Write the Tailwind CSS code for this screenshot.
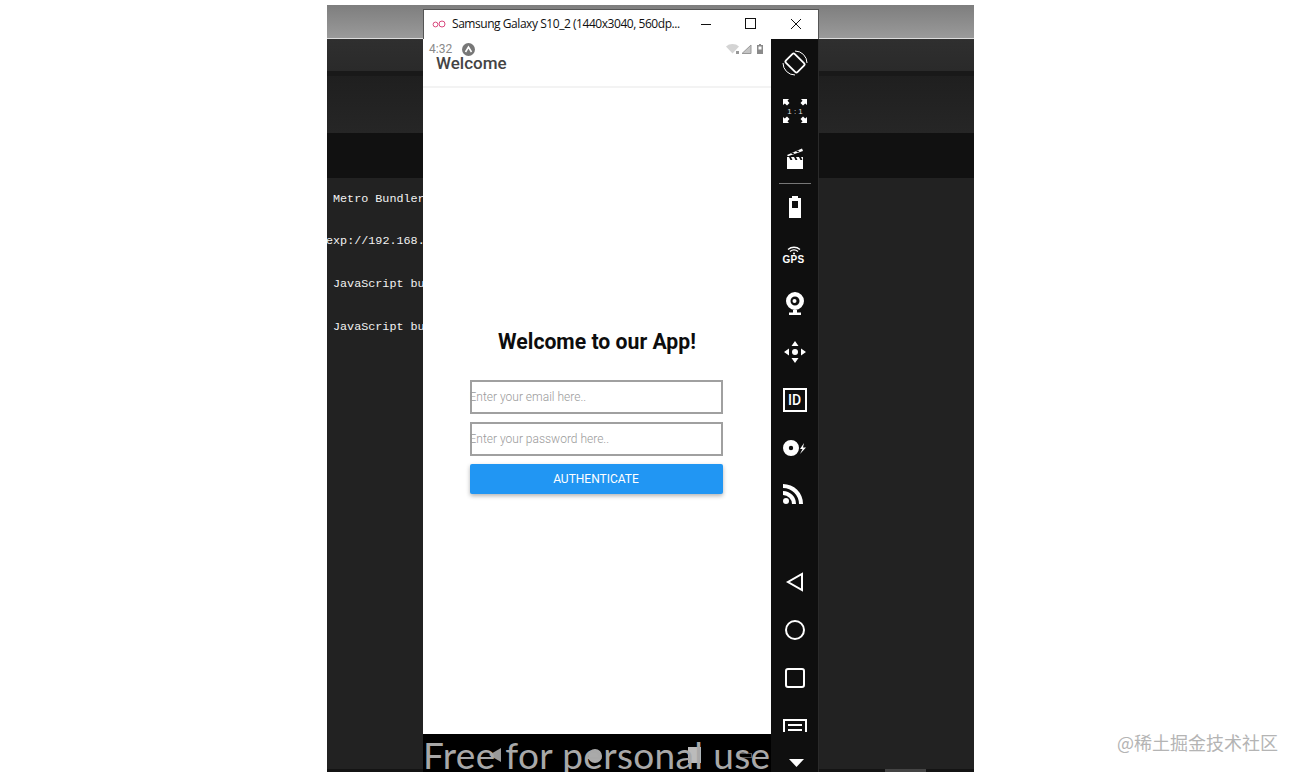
<!DOCTYPE html>
<html lang="en">
<head>
    <meta charset="UTF-8">
    <title>Samsung Galaxy S10_2</title>
    <script src="https://cdn.jsdelivr.net/npm/@tailwindcss/browser@4"></script>
</head>
<body class="bg-white h-[775px] w-[1300px] overflow-hidden relative font-['Roboto',sans-serif]">
    <!-- screenshot of the desktop behind the emulator -->
    <div class="relative ml-[327px] mt-[5px] w-[647px] h-[767px] flex flex-col bg-[#222] overflow-hidden">
        <div class="h-[33px] bg-gradient-to-b from-[#7e7e7e] to-[#9a9a9a]"></div>
        <div class="h-px bg-[#dcdcdc]"></div>
        <div class="h-[32px] bg-gradient-to-b from-[#2f2f2f] to-[#2a2a2a]"></div>
        <div class="h-[5px] bg-[#191919]"></div>
        <div class="h-[57px] bg-gradient-to-b from-[#1f1f1f] to-[#262626]"></div>
        <div class="h-[45px] bg-[#111]"></div>
        <div class="flex-1 pt-[13.500px] pl-[6px] font-['Liberation_Mono',monospace] text-[11.75px] leading-[14px] text-[#f2f2f2]">
            <p class="whitespace-nowrap">Metro Bundler</p>
            <p class="mt-[28.700px] -ml-[7px] whitespace-nowrap">exp://192.168.</p>
            <p class="mt-[28.700px] whitespace-nowrap">JavaScript bu</p>
            <p class="mt-[28.700px] whitespace-nowrap">JavaScript bu</p>
        </div>
        <div class="h-[3px] bg-[#141414] flex">
            <div class="ml-[558px] w-[41px] bg-[#444]"></div>
        </div>

        <!-- emulator window -->
        <div class="absolute left-[96px] top-[4px] w-[396px] h-[763px] flex flex-col">
            <div class="h-[30px] pb-[2px] bg-white border-t border-l border-r border-[#555] flex items-center shrink-0">
                <svg class="ml-[8px]" width="14" height="8" viewBox="0 0 14 8" fill="none" stroke="#d9487d" stroke-width="1">
                    <circle cx="3.500" cy="4.500" r="2.400"/>
                    <circle cx="10" cy="4" r="3"/>
                </svg>
                <span class="ml-[6px] w-[236px] font-['Open_Sans',sans-serif] text-[12px] tracking-[-0.45px] text-[#111] whitespace-nowrap">Samsung Galaxy S10_2 (1440x3040, 560dp...</span>
                <svg class="ml-[12px]" width="12" height="12" viewBox="0 0 12 12" stroke="#111" fill="none">
                    <path d="M1 6.500h10"/>
                </svg>
                <svg class="ml-[33px]" width="11" height="11" viewBox="0 0 11 11" stroke="#111" fill="none">
                    <rect x="0.500" y="0.500" width="10" height="10"/>
                </svg>
                <svg class="ml-[34px]" width="12" height="12" viewBox="0 0 12 12" stroke="#111" fill="none">
                    <path d="M1 1l10 10M11 1L1 11"/>
                </svg>
            </div>
            <div class="flex flex-1 min-h-0">
                <!-- phone -->
                <div class="w-[348px] flex flex-col bg-black">
                    <div class="relative h-[49px] bg-white border-b-2 border-[#f3f3f3] shrink-0">
                        <div class="absolute top-0 left-0 right-0 h-[18px] flex items-center pt-[2px]">
                            <span class="ml-[6px] text-[12px] text-[#8a8a8a]">4:32</span>
                            <span class="ml-[10px] w-[13px] h-[13px] rounded-full bg-[#777] flex items-center justify-center">
                                <svg width="9" height="9" viewBox="0 0 9 9" fill="none" stroke="#fff" stroke-width="1.600"><path d="M1.500 7L4.500 2l3 5"/></svg>
                            </span>
                            <svg class="ml-auto" width="14" height="10" viewBox="0 0 14 10" fill="#d4d4d4"><path d="M0 2.500C3.500-.8 9.500-.8 13 2.500L6.500 9.500z"/><rect x="10" y="7" width="3" height="3" fill="#999"/></svg>
                            <svg class="ml-[1px]" width="11" height="10" viewBox="0 0 11 10" fill="#c4c4c4" stroke="#999"><path d="M1 9.500L10 1v8.500z"/></svg>
                            <svg class="ml-[5px] mr-[8px]" width="6" height="10" viewBox="0 0 6 10" fill="#8a8a8a"><path fill-rule="evenodd" d="M2 0h2v1h2v9H0V1h2zM1.500 2.500v3h3v-3z"/></svg>
                        </div>
                        <h1 class="pl-[13px] pt-[14px] text-[17px] leading-[20px] font-medium text-[#444]">Welcome</h1>
                    </div>
                    <div class="flex-1 bg-white flex flex-col items-center justify-center">
                        <h2 class="text-[21.200px] leading-[25px] font-bold text-[#0d0d0d]">Welcome to our App!</h2>
                        <div class="mt-[26px] -ml-[2px] w-[253px] h-[34px] border-2 border-[#a0a0a0] flex items-center font-light text-[12px] text-[#9a9a9a] whitespace-nowrap"><span class="-ml-[2px]">Enter your email here..</span></div>
                        <div class="mt-[8px] -ml-[2px] w-[253px] h-[34px] border-2 border-[#a0a0a0] flex items-center font-light text-[12px] text-[#9a9a9a] whitespace-nowrap"><span class="-ml-[2px]">Enter your password here..</span></div>
                        <button class="mt-[8px] -ml-[2px] w-[253px] h-[30px] bg-[#2196f3] rounded-[2px] shadow-[0_2px_4px_rgba(0,0,0,0.3)] text-[12px] text-white">AUTHENTICATE</button>
                    </div>
                    <div class="relative h-[37px] mt-px bg-black overflow-hidden shrink-0">
                        <svg class="absolute left-[64px] top-[12px]" width="16" height="16" viewBox="0 0 16 16" fill="#999"><path d="M14 1v14L2 8z"/></svg>
                        <div class="absolute left-[165px] top-[14px] w-[14px] h-[14px] rounded-full bg-[#aaa]"></div>
                        <div class="absolute left-[265px] top-[12px] w-[13px] h-[16px] bg-[#bbb]"></div>
                        <div class="absolute left-[316px] top-[18px] w-[13px] h-[5px] border border-[#555]"></div>
                        <p class="absolute left-0 top-[-6px] font-['Lato',sans-serif] text-[37px] tracking-[0.35px] leading-[52px] text-[#a8a8a8] whitespace-nowrap">Free for personal use</p>
                    </div>
                </div>
                <!-- emulator sidebar -->
                <div class="w-[48px] bg-[#0f0f0f] border-r border-[#2a2a2a] flex flex-col items-center text-white">
                    <div class="h-[48px] w-full flex items-center justify-center">
                        <svg width="26" height="26" viewBox="0 0 26 26" fill="none" stroke="#fff">
                            <rect x="6.750" y="4.750" width="12.500" height="16.500" rx="1.800" stroke-width="1.800" transform="rotate(-45 13 13)"/>
                            <path d="M13 1A12 12 0 0 1 25 13M13 25A12 12 0 0 1 1 13" stroke-width="1"/>
                        </svg>
                    </div>
                    <div class="h-[48px] w-full flex items-center justify-center">
                        <svg width="26" height="26" viewBox="0 0 26 26" fill="#fff">
                            <path d="M1 1h6L5.500 2.800 7.500 5 5 7.500 2.800 5.500 1 7zM25 1h-6l1.500 1.800-2 2.200 2.500 2.500 2.200-2L25 7zM1 25h6l-1.500-1.800 2-2.200L5 18.500l-2.200 2L1 19zM25 25h-6l1.500-1.800-2-2.200 2.500-2.500 2.200 2L25 19z"/>
                            <text x="13" y="15.800" text-anchor="middle" font-size="8" font-family="Liberation Sans" fill="#ddd" xml:space="preserve">1 : 1</text>
                        </svg>
                    </div>
                    <div class="h-[48px] w-full flex items-center justify-center">
                        <svg class="-mt-[2px]" width="20" height="23" viewBox="0 0 20 23" fill="#fff">
                            <rect x="2" y="10" width="16" height="12"/>
                            <path d="M2 8L17 1.500l1 2.500L3 9.300z"/>
                            <path d="M6 6.300l2-.8 1.500 1-2 .8zM11 4.200l2-.8 1.500 1-2 .8z" fill="#0f0f0f"/>
                            <path d="M4 10h2l1.500 3h-2zM9 10h2l1.500 3h-2zM14 10h2l1.500 3h-2z" fill="#0f0f0f"/>
                        </svg>
                    </div>
                    <div class="w-[32px] h-px bg-[#777] shrink-0"></div>
                    <div class="h-[48px] w-full flex items-center justify-center">
                        <svg class="-mt-[2px]" width="12" height="22" viewBox="0 0 12 22" fill="#fff">
                            <path fill-rule="evenodd" d="M3 0h6v2h3v20H0V2h3zM3 5v7h6V5z"/>
                        </svg>
                    </div>
                    <div class="h-[48px] w-full flex flex-col items-center justify-center -mt-[1px] -ml-[2px]">
                        <svg width="14" height="9" viewBox="0 0 14 9" fill="none" stroke="#fff" stroke-width="1.300">
                            <path d="M1 3.500C4.500.5 9.500.5 13 3.500M3 5.500c2.500-2 5.500-2 8 0"/>
                            <circle cx="7" cy="7.500" r="1" fill="#fff" stroke="none"/>
                        </svg>
                        <span class="font-['Liberation_Sans',sans-serif] text-[10px] leading-[9px] font-bold tracking-[0.3px]">GPS</span>
                    </div>
                    <div class="h-[48px] w-full flex items-center justify-center">
                        <svg class="mt-[1px]" width="20" height="23" viewBox="0 0 20 23" fill="#fff">
                            <path fill-rule="evenodd" d="M10 0a9 9 0 1 1 0 18 9 9 0 0 1 0-18zm0 4.500a4.500 4.500 0 1 0 0 9 4.500 4.500 0 0 0 0-9z"/>
                            <circle cx="9.500" cy="9" r="2"/>
                            <path d="M8 18h4v2.500h4V23H4v-2.500h4z"/>
                        </svg>
                    </div>
                    <div class="h-[48px] w-full flex items-center justify-center">
                        <svg class="mt-[2px]" width="24" height="24" viewBox="0 0 24 24" fill="#fff">
                            <circle cx="12" cy="12" r="3"/>
                            <path d="M12 1l3.500 5h-7zM12 23l-3.500-5h7zM1 12l5-3.500v7zM23 12l-5 3.500v-7z"/>
                        </svg>
                    </div>
                    <div class="h-[48px] w-full flex items-center justify-center">
                        <div class="mt-[2px] w-[24px] h-[24px] border-2 border-white flex items-center justify-center text-[14px] font-medium">ID</div>
                    </div>
                    <div class="h-[48px] w-full flex items-center justify-center">
                        <svg class="mt-[2px]" width="24" height="16" viewBox="0 0 24 16" fill="#fff">
                            <path fill-rule="evenodd" d="M8 0a8 8 0 1 1 0 16A8 8 0 0 1 8 0zm0 5.800a2.200 2.200 0 1 0 0 4.400 2.200 2.200 0 0 0 0-4.400z"/>
                            <path d="M21 3l-4 6h2.500L17 14l6-6.500h-3z"/>
                        </svg>
                    </div>
                    <div class="h-[48px] w-full flex items-center justify-center">
                        <svg class="-mt-[3px] -ml-[4px]" width="20" height="20" viewBox="0 0 20 20" fill="#fff">
                            <circle cx="3" cy="17" r="3"/>
                            <path d="M0 7a13 13 0 0 1 13 13H9A9 9 0 0 0 0 11z"/>
                            <path d="M0 0a20 20 0 0 1 20 20h-4A16 16 0 0 0 0 4z"/>
                        </svg>
                    </div>
                    <div class="h-[40px] shrink-0"></div>
                    <div class="h-[48px] w-full flex items-center justify-center">
                        <svg class="-mt-[2px]" width="20" height="20" viewBox="0 0 20 20" fill="none" stroke="#fff" stroke-width="2">
                            <path d="M17 2v16L3 10z"/>
                        </svg>
                    </div>
                    <div class="h-[48px] w-full flex items-center justify-center">
                        <div class="-mt-[2px] w-[20px] h-[20px] rounded-full border-2 border-white"></div>
                    </div>
                    <div class="h-[48px] w-full flex items-center justify-center">
                        <div class="-mt-[2px] w-[20px] h-[20px] rounded-[3px] border-2 border-white"></div>
                    </div>
                    <div class="h-[29px] pt-[16px] w-full flex justify-center overflow-hidden shrink-0">
                        <div class="w-[24px] h-[20px] border-2 border-white flex flex-col gap-[3px] px-[3px] pt-[3px] shrink-0">
                            <div class="h-[2px] bg-white"></div>
                            <div class="h-[2px] bg-white"></div>
                        </div>
                    </div>
                </div>
            </div>
        </div>
    </div>
    <svg class="absolute left-[789px] top-[759px]" width="15" height="8" viewBox="0 0 15 8" fill="#fff"><path d="M0 0h15L7.500 8z"/></svg>
    <div class="absolute left-[1117px] top-[730px] font-['Noto_Sans_CJK_SC',sans-serif] text-[18px] leading-[24px] text-[#b4b4b4] whitespace-nowrap">@稀土掘金技术社区</div>
</body>
</html>
